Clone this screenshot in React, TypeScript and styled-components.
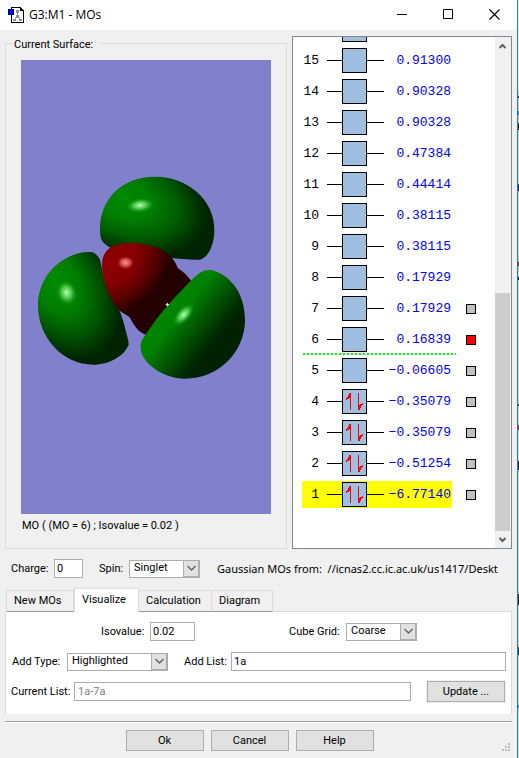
import React from "react";
import styled, { createGlobalStyle, css } from "styled-components";

const GlobalStyle = createGlobalStyle`
  *, *::before, *::after { box-sizing: border-box; }
  body { margin: 0; background: #fff; }
  body, button, input, select {
    font-family: Roboto, "Liberation Sans", sans-serif;
    font-size: 11px;
    line-height: 14px;
    color: #000;
  }
`;

const Desktop = styled.div`
  padding-right: 1px;
  background: linear-gradient(
    #e8e8e8 0 90px, #c4c8d0 90px 96px, #101050 96px 98px, #ccc 98px 111px,
    #2080d8 111px 115px, #ccc 115px 123px, #401020 123px 130px, #ccc 130px 184px,
    #103070 184px 191px, #ccc 191px 262px, #702020 262px 266px, #ccc 266px 277px,
    #101060 277px 280px, #ccc 280px 404px, #222 404px 406px, #ccc 406px 425px,
    #a02040 425px 430px, #c8d0dc 430px 461px, #301050 461px 470px, #ccc 470px 594px,
    #401828 594px 605px, #ccc 605px 647px, #103878 647px 655px, #ccc 655px 705px,
    #1088e0 705px 708px, #ccd4dc 708px
  );
`;

const Window = styled.main`
  display: flex;
  flex-direction: column;
  min-height: 100vh;
  border-right: 1px solid #1a80d0;
  background: #f0f0f0;
`;

const TitleBar = styled.header`
  display: flex;
  align-items: center;
  height: 30px;
  padding-left: 8px;
  background: #fff;
`;

const Title = styled.h1`
  flex: 1;
  margin: 0 0 0 5px;
  font: 400 12px/16px "Open Sans", "Noto Sans", sans-serif;
`;

const CaptionButton = styled.button`
  display: grid;
  place-items: center;
  width: 46px;
  height: 30px;
  padding: 0 0 2px;
  border: 0;
  background: transparent;
`;

const Workspace = styled.div`
  display: grid;
  grid-template-columns: 282px minmax(0, 1fr);
  gap: 5px;
  padding: 6px 5px 0;
`;

const SurfaceGroup = styled.fieldset`
  min-width: 0;
  margin: 0;
  padding: 10px 15px 15px;
  border: 1px solid #dcdcdc;
`;

const SurfaceLegend = styled.legend`
  height: 14px;
  margin-left: -8px;
  padding: 0 8px 0 1px;
  line-height: 18px;
`;

const SurfaceView = styled.svg`
  display: block;
  width: 100%;
  height: 454px;
  background: #8080cc;
`;

const SurfaceCaption = styled.p`
  margin: 5px 0 0 1px;
  white-space: nowrap;
`;

const OrbitalList = styled.section`
  contain: size;
  display: flex;
  overflow: hidden;
  border: 1px solid #828790;
  background: #fff;
`;

const Levels = styled.div`
  flex: 1;
  min-width: 0;
  display: flex;
  flex-direction: column;
  justify-content: flex-end;
  padding: 0 0 38px 9px;
`;

const LevelRow = styled.div<{ $fermi?: boolean }>`
  position: relative;
  flex: none;
  display: flex;
  align-items: center;
  height: 31px;
  ${(p) =>
    p.$fermi &&
    css`
      &::after {
        content: "";
        position: absolute;
        left: 1px;
        bottom: 0;
        width: 153px;
        height: 2px;
        background: repeating-linear-gradient(90deg, #00ff00 0 2px, transparent 2px 4px);
      }
    `}
`;

const LevelLine = styled.div<{ $selected?: boolean }>`
  display: grid;
  grid-template-columns: 17px 8px 15px 25px 17px 67px;
  align-items: center;
  width: 150px;
  height: 27px;
  background: ${(p) => (p.$selected ? "#ffff00" : "transparent")};
  font: 13px/16px "Liberation Mono", monospace;
`;

const LevelNumber = styled.span`
  text-align: right;
`;

const Wire = styled.span<{ $start?: boolean }>`
  ${(p) => p.$start && "grid-column: 3;"}
  height: 1px;
  background: #000;
`;

const OrbitalBox = styled.span`
  display: grid;
  place-items: center;
  width: 25px;
  height: 25px;
  border: 1px solid #000;
  background: #a0bedf;
`;

const Energy = styled.span`
  color: #0000e8;
  text-align: right;
`;

const Toggle = styled.input<{ $active?: boolean }>`
  appearance: none;
  width: 10px;
  height: 10px;
  margin: 0 0 0 14px;
  border: 1px solid #000;
  background: ${(p) => (p.$active ? "#ff0000" : "#c0c0c0")};
`;

const ScrollBar = styled.div`
  display: flex;
  flex-direction: column;
  width: 16px;
  padding-right: 1px;
  background: #f0f0f0;
`;

const ScrollArrow = styled.button`
  display: grid;
  place-items: center;
  height: 17px;
  padding: 0;
  border: 0;
  background: transparent;
`;

const ScrollTrack = styled.div`
  flex: 1;
  display: grid;
  grid-template-rows: 239fr 238fr;
`;

const ScrollThumb = styled.div`
  grid-row: 2;
  background: #cdcdcd;
`;

const MoleculeRow = styled.div`
  display: flex;
  align-items: center;
  padding: 1px 5px 0 11px;
  height: 38px;
`;

const Label = styled.label<{ $width: number }>`
  flex: none;
  width: ${(p) => p.$width}px;
  white-space: nowrap;
`;

const TextBox = styled.input<{ $width?: number }>`
  ${(p) => (p.$width ? `flex: none; width: ${p.$width}px;` : "flex: 1; min-width: 0;")}
  height: 19px;
  padding: 0 2px;
  border: 1px solid #abadb3;
  border-radius: 0;
  background: #fff;
  &:disabled { color: #808080; padding-left: 3px; }
`;

const Combo = styled.div<{ $width: number }>`
  flex: none;
  display: grid;
  width: ${(p) => p.$width}px;
  height: 18px;
`;

const ComboSelect = styled.select`
  grid-area: 1 / 1;
  appearance: none;
  width: 100%;
  height: 18px;
  padding: 0 18px 1px 4px;
  border: 1px solid #adadad;
  border-radius: 0;
  background: #fff;
`;

const ComboArrow = styled.span`
  grid-area: 1 / 1;
  justify-self: end;
  display: grid;
  place-items: center;
  width: 17px;
  height: 18px;
  border: 1px solid #adadad;
  border-right-width: 2px;
  border-bottom-width: 2px;
  background: #e1e1e1;
  pointer-events: none;
`;

const SourcePath = styled.span`
  flex: 1;
  min-width: 0;
  overflow: hidden;
  white-space: pre;
  font: 11px/16px "Noto Sans", "Open Sans", sans-serif;
`;

const TabStrip = styled.div`
  display: flex;
  align-items: flex-end;
  height: 25px;
  margin: 0 5px;
  padding-left: 1px;
`;

const Tab = styled.button<{ $width: number; $active?: boolean }>`
  width: ${(p) => p.$width}px;
  height: ${(p) => (p.$active ? 24 : 22)}px;
  padding: 0 0 1px 7px;
  text-align: left;
  border: 1px solid #dcdcdc;
  border-left-width: ${(p) => (p.$active ? 1 : 0)}px;
  border-bottom-color: ${(p) => (p.$active ? "#fff" : "#8c9a98")};
  background: ${(p) => (p.$active ? "#fff" : "#f0f0f0")};
  &:first-child { border-left-width: 1px; }
`;

const TabFiller = styled.div`
  flex: 1;
  border-bottom: 1px solid #dcdcdc;
`;

const Panel = styled.section`
  display: flex;
  flex-direction: column;
  gap: 9px;
  margin: 0 5px;
  padding: 9px 5px 12px;
  border: 1px solid #dcdcdc;
  border-width: 0 1px;
  background: #fff;
`;

const FieldRow = styled.div<{ $indent?: number }>`
  display: flex;
  align-items: center;
  padding-left: ${(p) => p.$indent ?? 0}px;
  height: 21px;
`;

const Gap = styled.span<{ $width: number }>`
  flex: none;
  width: ${(p) => p.$width}px;
`;

const PushButton = styled.button<{ $ring?: boolean }>`
  flex: none;
  width: 78px;
  height: 21px;
  padding: 0;
  border: 1px solid #adadad;
  background: #e1e1e1;
  ${(p) => p.$ring && "outline: 1px solid #f0f0f0; margin: 0 1px 0 16px;"}
`;

const Footer = styled.footer`
  display: flex;
  align-items: center;
  gap: 8px;
  margin: 7px 5px 0;
  padding-top: 8px;
  border-top: 1px solid #a0a0a0;
  box-shadow: inset 0 1px #fff;
`;

const FooterButtons = styled.div`
  flex: 1;
  display: flex;
  justify-content: center;
  gap: 7px;
`;

const SizeGrip = styled.svg`
  align-self: flex-end;
`;

type Level = { n: number; energy: string; filled?: boolean; toggle?: boolean };

const levels: Level[] = [
  { n: 15, energy: "0.91300" },
  { n: 14, energy: "0.90328" },
  { n: 13, energy: "0.90328" },
  { n: 12, energy: "0.47384" },
  { n: 11, energy: "0.44414" },
  { n: 10, energy: "0.38115" },
  { n: 9, energy: "0.38115" },
  { n: 8, energy: "0.17929" },
  { n: 7, energy: "0.17929", toggle: true },
  { n: 6, energy: "0.16839", toggle: true },
  { n: 5, energy: "−0.06605", toggle: true },
  { n: 4, energy: "−0.35079", filled: true, toggle: true },
  { n: 3, energy: "−0.35079", filled: true, toggle: true },
  { n: 2, energy: "−0.51254", filled: true, toggle: true },
  { n: 1, energy: "−6.77140", filled: true, toggle: true },
];

const AppIcon = () => (
  <svg width="16" height="16" viewBox="0 0 16 16" shapeRendering="crispEdges" aria-hidden="true">
    <path d="M3.5.5h9l3 3v12h-12z" fill="#fff" stroke="#000" />
    <path d="M12 0v4h4V3h-1V2h-1V1h-1V0z" fill="#000" />
    <path d="M9 5h1v5H9zM7 10h2v1H8v1H7zM10 10h2v2h-1v-1h-1z" fill="#aaa" />
    <path d="M8 3h3v3H8zM8 8h3v3H8zM5 12h3v2H5zM11 12h3v2h-3z" fill="#909090" />
    <path d="M.5 2.5h5v5h-5z" fill="#0000ff" stroke="#000080" />
  </svg>
);

const Spins = () => (
  <svg width="17" height="17" viewBox="0 0 17 17" shapeRendering="crispEdges" aria-hidden="true">
    <path d="M4 0h1v17H4zM12 0h1v17h-1z" fill="#f00" />
    <path d="M4 0v5H3v1H1v1H0V5h1V4h1V2h1V0zM13 17v-5h1v-1h2v-1h1v2h-1v1h-1v2h-1v2z" fill="#f00" />
  </svg>
);

const ScrollChevron = ({ down }: { down?: boolean }) => (
  <svg width="7" height="6" viewBox="0 0 7 6" aria-hidden="true">
    <path d={down ? "M.5 1 3.5 4 6.5 1" : "M.5 5 3.5 2 6.5 5"} fill="none" stroke="#606060" strokeWidth="2" />
  </svg>
);

const Surface = () => (
  <SurfaceView viewBox="0 0 250 454" role="img" aria-label="Molecular orbital surface">
    <defs>
      <radialGradient id="topLobe" gradientUnits="userSpaceOnUse" cx="0" cy="0" r="1" gradientTransform="translate(310 115) rotate(20) scale(265 165)">
        <stop offset="0" stopColor="#008a00" />
        <stop offset=".35" stopColor="#007e00" />
        <stop offset=".65" stopColor="#005c00" />
        <stop offset=".9" stopColor="#003000" />
        <stop offset="1" stopColor="#002400" />
      </radialGradient>
      <radialGradient id="leftLobe" gradientUnits="userSpaceOnUse" cx="0" cy="0" r="1" gradientTransform="translate(105 365) rotate(58) scale(255 165)">
        <stop offset="0" stopColor="#008c00" />
        <stop offset=".4" stopColor="#007c00" />
        <stop offset=".7" stopColor="#005400" />
        <stop offset=".95" stopColor="#002c00" />
        <stop offset="1" stopColor="#002400" />
      </radialGradient>
      <linearGradient id="rightLobe" gradientUnits="userSpaceOnUse" x1="440" y1="430" x2="590" y2="550">
        <stop offset="0" stopColor="#008400" />
        <stop offset=".25" stopColor="#008400" />
        <stop offset=".6" stopColor="#005400" />
        <stop offset=".9" stopColor="#002a00" />
        <stop offset="1" stopColor="#002200" />
      </linearGradient>
      <radialGradient id="redLobe" gradientUnits="userSpaceOnUse" cx="0" cy="0" r="1" gradientTransform="translate(285 305) rotate(-45) scale(190 145)">
        <stop offset="0" stopColor="#900000" />
        <stop offset=".4" stopColor="#840000" />
        <stop offset=".75" stopColor="#540000" />
        <stop offset="1" stopColor="#240000" />
      </radialGradient>
      <radialGradient id="greenShine">
        <stop offset="0" stopColor="#b8ffb8" />
        <stop offset=".45" stopColor="#60d860" stopOpacity=".8" />
        <stop offset="1" stopColor="#009000" stopOpacity="0" />
      </radialGradient>
      <radialGradient id="redShine">
        <stop offset="0" stopColor="#ff9090" />
        <stop offset=".5" stopColor="#e06060" stopOpacity=".8" />
        <stop offset="1" stopColor="#900000" stopOpacity="0" />
      </radialGradient>
    </defs>
    <g transform="translate(-1 100) scale(.33333)">
      <path fill="url(#topLobe)" d="M240 205C241 115 307 50 405 50 503 50 583 120 583 208 583 252 568 290 540 299 510 301 480 295 450 294L300 275 268 262C244 245 240 238 240 205Z" />
      <ellipse cx="360" cy="136" rx="44" ry="23" fill="url(#greenShine)" transform="rotate(-7 360 136)" />
      <path fill="url(#leftLobe)" d="M218 277C145 269 54 335 54 435 54 535 130 614 220 614 267 614 313 588 326 554L325 542C317 513 312 484 300 455L262 385C250 360 249 333 240 300 236 290 227 281 218 277Z" />
      <ellipse cx="140" cy="398" rx="32" ry="40" fill="url(#greenShine)" transform="rotate(-14 140 398)" />
      <path fill="url(#redLobe)" d="M246 315C246 270 275 249 335 249 397 250 458 275 473 324 491 335 505 350 514 363L450 445 380 525C354 518 342 496 329 472 315 460 296 456 285 435 262 400 246 355 246 315Z" />
      <path fill="url(#redShine)" d="M288 330 297 294 345 286 334 330Z" />
      <path fill="url(#rightLobe)" d="M363 548C370 530 380 520 392 502 418 464 463 411 520 355 538 336 555 328 575 330 632 346 675 400 675 480 675 575 597 656 495 656 428 656 350 603 363 548Z" />
      <ellipse cx="491" cy="464" rx="43" ry="22" fill="url(#greenShine)" transform="rotate(-48 491 464)" />
      <path d="M437 434h10M442 429v10" stroke="#fff" strokeWidth="3" />
    </g>
  </SurfaceView>
);

type DropDownProps = { id: string; width: number; value: string };

const DropDown = ({ id, width, value }: DropDownProps) => (
  <Combo $width={width}>
    <ComboSelect id={id} defaultValue={value}>
      <option>{value}</option>
    </ComboSelect>
    <ComboArrow>
      <svg width="9" height="6" viewBox="0 0 9 6" aria-hidden="true">
        <path d="M.5 1 4.5 5 8.5 1" fill="none" stroke="#606060" strokeWidth="1.3" />
      </svg>
    </ComboArrow>
  </Combo>
);

const LevelDiagram = ({ filled }: { filled?: boolean }) => (
  <>
    <Wire $start />
    <OrbitalBox>{filled && <Spins />}</OrbitalBox>
    <Wire />
  </>
);

export default function App() {
  return (
    <Desktop>
      <GlobalStyle />
      <Window>
        <TitleBar>
          <AppIcon />
          <Title>G3:M1 - MOs</Title>
          <CaptionButton aria-label="Minimize">
            <svg width="11" height="11"><path d="M0 5.5h10" stroke="#000" /></svg>
          </CaptionButton>
          <CaptionButton aria-label="Maximize">
            <svg width="11" height="11"><path d="M.5.5h9v9h-9z" fill="none" stroke="#000" /></svg>
          </CaptionButton>
          <CaptionButton aria-label="Close">
            <svg width="11" height="11"><path d="m.5.5 10 10m0-10-10 10" stroke="#000" strokeWidth="1.2" /></svg>
          </CaptionButton>
        </TitleBar>

        <Workspace>
          <SurfaceGroup>
            <SurfaceLegend>Current Surface:</SurfaceLegend>
            <Surface />
            <SurfaceCaption>MO ( (MO = 6) ; Isovalue = 0.02 )</SurfaceCaption>
          </SurfaceGroup>
          <OrbitalList aria-label="Orbital energies">
            <Levels>
              <LevelRow>
                <LevelLine>
                  <LevelDiagram />
                </LevelLine>
              </LevelRow>
              {levels.map((level) => (
                <LevelRow key={level.n} $fermi={level.n === 6}>
                  <LevelLine $selected={level.n === 1}>
                    <LevelNumber>{level.n}</LevelNumber>
                    <LevelDiagram filled={level.filled} />
                    <Energy>{level.energy}</Energy>
                  </LevelLine>
                  {level.toggle && (
                    <Toggle type="checkbox" aria-label={`Orbital ${level.n}`} $active={level.n === 6} />
                  )}
                </LevelRow>
              ))}
            </Levels>
            <ScrollBar>
              <ScrollArrow aria-label="Scroll up"><ScrollChevron /></ScrollArrow>
              <ScrollTrack><ScrollThumb /></ScrollTrack>
              <ScrollArrow aria-label="Scroll down"><ScrollChevron down /></ScrollArrow>
            </ScrollBar>
          </OrbitalList>
        </Workspace>

        <MoleculeRow>
          <Label $width={43} htmlFor="charge">Charge:</Label>
          <TextBox $width={29} id="charge" defaultValue="0" />
          <Gap $width={16} />
          <Label $width={30} htmlFor="spin">Spin:</Label>
          <DropDown id="spin" width={71} value="Singlet" />
          <Gap $width={17} />
          <SourcePath>{"Gaussian MOs from:  //icnas2.cc.ic.ac.uk/us1417/Deskt"}</SourcePath>
        </MoleculeRow>

        <TabStrip role="tablist">
          <Tab role="tab" $width={68}>New MOs</Tab>
          <Tab role="tab" aria-selected $width={65} $active>Visualize</Tab>
          <Tab role="tab" $width={73}>Calculation</Tab>
          <Tab role="tab" $width={61}>Diagram</Tab>
          <TabFiller />
        </TabStrip>
        <Panel role="tabpanel">
          <FieldRow $indent={90}>
            <Label $width={49} htmlFor="isovalue">Isovalue:</Label>
            <TextBox $width={45} id="isovalue" defaultValue="0.02" />
            <Gap $width={94} />
            <Label $width={57} htmlFor="grid">Cube Grid:</Label>
            <DropDown id="grid" width={71} value="Coarse" />
          </FieldRow>
          <FieldRow $indent={1}>
            <Label $width={55} htmlFor="addType">Add Type:</Label>
            <DropDown id="addType" width={101} value="Highlighted" />
            <Gap $width={16} />
            <Label $width={47} htmlFor="addList">Add List:</Label>
            <TextBox id="addList" defaultValue="1a" />
          </FieldRow>
          <FieldRow>
            <Label $width={63} htmlFor="currentList">Current List:</Label>
            <TextBox id="currentList" disabled defaultValue="1a-7a" />
            <PushButton $ring>Update ...</PushButton>
          </FieldRow>
        </Panel>

        <Footer>
          <FooterButtons>
            <PushButton>Ok</PushButton>
            <PushButton>Cancel</PushButton>
            <PushButton>Help</PushButton>
          </FooterButtons>
          <SizeGrip width="10" height="8" aria-hidden="true">
            <path d="M6 0h2v2H6zM3 3h2v2H3zM6 3h2v2H6zM0 6h2v2H0zM3 6h2v2H3zM6 6h2v2H6z" fill="#bcbcbc" />
          </SizeGrip>
        </Footer>
      </Window>
    </Desktop>
  );
}
